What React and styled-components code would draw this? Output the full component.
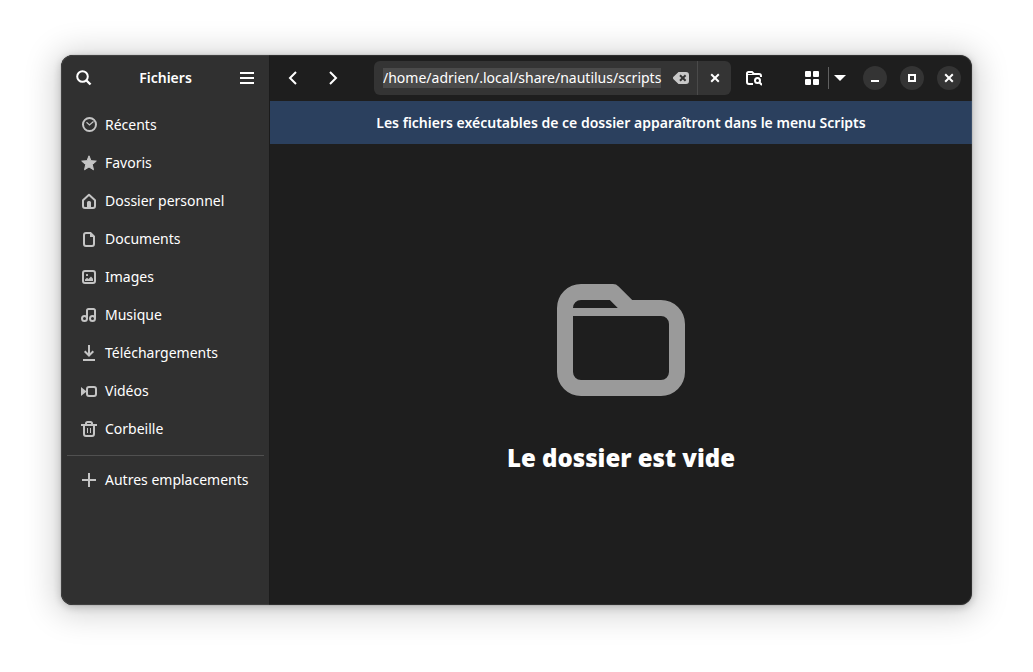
import { useEffect, useRef, useState } from "react";
import styled, { createGlobalStyle } from "styled-components";

const GlobalStyle = createGlobalStyle`
  * {
    box-sizing: border-box;
  }
  body {
    margin: 0;
    background: #ffffff;
    font-family: "Noto Sans", "Open Sans", sans-serif;
    font-size: 14px;
    line-height: 20px;
    color: #ffffff;
  }
  button,
  input {
    font: inherit;
    color: inherit;
  }
`;

const Desktop = styled.div`
  display: flex;
  min-height: 100vh;
  padding: 55px 61px 67px;
`;

const Window = styled.div`
  position: relative;
  flex: 1;
  display: flex;
  min-width: 0;
  border-radius: 12px;
  overflow: hidden;
  background: #1e1e1e;
  box-shadow: 0 0 1px rgba(0, 0, 0, 0.5), 0 2px 8px rgba(0, 0, 0, 0.2),
    0 3px 32px 6px rgba(0, 0, 0, 0.18);

  /* thin highlight over the window edge */
  &::after {
    content: "";
    position: absolute;
    inset: 0;
    border-radius: 12px;
    box-shadow: inset 0 0 0 1px rgba(255, 255, 255, 0.08);
    pointer-events: none;
  }
`;

const Sidebar = styled.aside`
  width: 208px;
  flex-shrink: 0;
  background: #303030;
`;

const SidebarHeader = styled.header`
  display: flex;
  align-items: center;
  justify-content: space-between;
  height: 46px;
  padding: 6px 5px 6px 6px;
`;

const Title = styled.h1`
  margin: 0;
  font-size: 14px;
  font-weight: 600;
`;

const IconButton = styled.button`
  display: flex;
  align-items: center;
  justify-content: center;
  flex-shrink: 0;
  width: ${(props) => props.$width || 34}px;
  height: 34px;
  padding: 0;
  border: 0;
  border-radius: 6px;
  background: transparent;
`;

const PlaceList = styled.ul`
  margin: 0;
  padding: 5px 6px;
  list-style: none;
`;

const Place = styled.a`
  display: flex;
  align-items: center;
  gap: 8px;
  height: 38px;
  padding: 0 14px;
  color: #ffffff;
  text-decoration: none;
  white-space: nowrap;

  svg {
    color: #c4c4c4;
  }
`;

const Separator = styled.hr`
  height: 1px;
  margin: 2px 5px 0 6px;
  border: 0;
  background: #505050;
`;

const Main = styled.main`
  flex: 1;
  display: flex;
  flex-direction: column;
  min-width: 0;
  border-left: 1px solid #1b1b1b;
`;

const HeaderBar = styled.header`
  display: flex;
  align-items: center;
  gap: 6px;
  height: 46px;
  padding: 6px 11px 6px 6px;
`;

const PathEntry = styled.form`
  flex: 1;
  display: flex;
  align-items: center;
  min-width: 0;
  height: 34px;
  margin-left: 18px;
  border-radius: 6px;
  background: #343434;
`;

const PathInput = styled.input`
  flex: 1;
  min-width: 0;
  height: 20px;
  margin-left: 9px;
  padding: 0;
  border: 0;
  outline: 0;
  background: transparent;
  caret-color: transparent;

  &::selection {
    background: #4a4a4a;
    color: #ffffff;
  }
`;

const CancelButton = styled(IconButton)`
  border-left: 1px solid #4a4a4a;
  border-radius: 0 6px 6px 0;
`;

const ViewSwitcher = styled.div`
  display: flex;
  align-items: center;
  margin: 0 6px 0 18px;
`;

const ViewDivider = styled.span`
  width: 1px;
  height: 22px;
  background: #606060;
`;

const WindowControls = styled.div`
  display: flex;
  gap: 13px;
`;

const ControlButton = styled.button`
  display: flex;
  align-items: center;
  justify-content: center;
  width: 24px;
  height: 24px;
  padding: 0;
  border: 0;
  border-radius: 50%;
  background: #343434;
`;

const Banner = styled.div`
  padding: 12px;
  line-height: 19px;
  font-weight: 600;
  text-align: center;
  background: #2b405e;
`;

const EmptyState = styled.section`
  flex: 1;
  display: flex;
  flex-direction: column;
  align-items: center;
  justify-content: center;
  gap: 37px;
  padding-top: 1px;

  svg {
    color: #9a9a9a;
  }
`;

const EmptyTitle = styled.h2`
  margin: 0;
  font-size: 24px;
  line-height: 34px;
  font-weight: 900;
`;

const Icon = ({ size = 16, children }) => (
  <svg width={size} height={size} viewBox="0 0 16 16" fill="currentColor" aria-hidden="true">
    {children}
  </svg>
);

const line = { fill: "none", stroke: "currentColor", strokeWidth: 2 };

const SearchIcon = () => (
  <Icon>
    <circle cx="6.5" cy="6.5" r="5.3" {...line} />
    <path d="M10.5 10.5 14.5 14.5" {...line} strokeWidth="2.4" />
  </Icon>
);

const MenuIcon = () => (
  <Icon>
    <path d="M1 2h14v2H1zM1 7h14v2H1zM1 12h14v2H1z" />
  </Icon>
);

const RecentIcon = () => (
  <Icon>
    <circle cx="8.5" cy="7.5" r="6.5" {...line} />
    <path d="M5.5 5.2 8.5 8l4-3.5" {...line} strokeWidth="1.2" />
  </Icon>
);

const StarIcon = () => (
  <Icon>
    <path
      d="M8 .8 10 5.7 15.3 6.1 11.3 9.6 12.5 14.8 8 12 3.5 14.8 4.7 9.6.7 6.1 6 5.7z"
      stroke="currentColor"
      strokeLinejoin="round"
    />
  </Icon>
);

const HomeIcon = () => (
  <Icon>
    <path d="M2 7.2 8 1.8l6 5.4V13a2 2 0 0 1-2 2H4a2 2 0 0 1-2-2z" {...line} strokeLinejoin="round" />
    <path d="M6 15V9.5A1.5 1.5 0 0 1 7.5 8h1A1.5 1.5 0 0 1 10 9.5V15z" />
  </Icon>
);

const DocumentIcon = () => (
  <Icon>
    <path d="M5 2h4.5L13 5.5V13a2 2 0 0 1-2 2H5a2 2 0 0 1-2-2V4a2 2 0 0 1 2-2z" {...line} />
    <path d="M9 1.5V6h4.5z" />
  </Icon>
);

const ImageIcon = () => (
  <Icon>
    <rect x="2" y="2" width="12" height="12" rx="2" {...line} />
    <rect x="5" y="5" width="2" height="2" rx=".6" />
    <path d="M4 12v-1.5l2-1.7 1.5 1.2L10 7.6l2 2.2V12z" />
  </Icon>
);

const MusicIcon = () => (
  <Icon>
    <circle cx="3.5" cy="11.5" r="2.5" {...line} />
    <circle cx="11.5" cy="11.5" r="2.5" {...line} />
    <path d="M6 11.5v-8A1.5 1.5 0 0 1 7.5 2h5A1.5 1.5 0 0 1 14 3.5v8" {...line} />
  </Icon>
);

const DownloadIcon = () => (
  <Icon>
    <path d="M8 0v10M3.7 6.2 8 10.5l4.3-4.3" {...line} />
    <path d="M2 14h12v2H2z" />
  </Icon>
);

const VideoIcon = () => (
  <Icon>
    <rect x="6" y="4" width="9" height="9" rx="2" {...line} />
    <path d="M0 4v9l5-4V8z" />
  </Icon>
);

const TrashIcon = () => (
  <Icon>
    <path d="M0 3h16v2H0z" />
    <path
      d="M5 4V2.5A1.5 1.5 0 0 1 6.5 1h3A1.5 1.5 0 0 1 11 2.5V4M3 4v9a2 2 0 0 0 2 2h6a2 2 0 0 0 2-2V4"
      {...line}
    />
    <path d="M6 7h1v5H6zM9 7h1v5H9z" />
  </Icon>
);

const PlusIcon = () => (
  <Icon>
    <path d="M7 1h2v6h6v2H9v6H7V9H1V7h6z" />
  </Icon>
);

const BackIcon = () => (
  <Icon>
    <path d="M11 2 5 8l6 6" {...line} />
  </Icon>
);

const ForwardIcon = () => (
  <Icon>
    <path d="M5 2l6 6-6 6" {...line} />
  </Icon>
);

const ClearIcon = () => (
  <Icon>
    <path
      fill="#c8c8c8"
      d="M5.5 2H13a3 3 0 0 1 3 3v6a3 3 0 0 1-3 3H5.5L.5 9.2a1.6 1.6 0 0 1 0-2.4z"
    />
    <path d="M7 5.2 12.6 10.8M12.6 5.2 7 10.8" fill="none" stroke="#343434" strokeWidth="2" />
  </Icon>
);

const CrossIcon = () => (
  <Icon>
    <path d="M4.2 4.2 11.8 11.8M11.8 4.2 4.2 11.8" {...line} />
  </Icon>
);

const FolderSearchIcon = () => (
  <Icon>
    <path
      d="M7 14H3a2 2 0 0 1-2-2V3.5A1.5 1.5 0 0 1 2.5 2H6l2 2h5a2 2 0 0 1 2 2v1"
      {...line}
    />
    <path d="M1 4h7v1H1z" />
    <circle cx="11.5" cy="10.5" r="2.5" {...line} />
    <path d="M13.2 12.2 16 15" {...line} />
  </Icon>
);

const GridIcon = () => (
  <Icon>
    <rect x="1" y="1" width="6" height="6" rx="1" />
    <rect x="9" y="1" width="6" height="6" rx="1" />
    <rect x="1" y="9" width="6" height="6" rx="1" />
    <rect x="9" y="9" width="6" height="6" rx="1" />
  </Icon>
);

const DropDownIcon = () => (
  <Icon>
    <path d="M2 5h12l-6 6z" />
  </Icon>
);

const MinimizeIcon = () => (
  <Icon>
    <path d="M4 10h8v2H4z" />
  </Icon>
);

const MaximizeIcon = () => (
  <Icon>
    <path fillRule="evenodd" d="M4 4h8v8H4zM6 6v4h4V6z" />
  </Icon>
);

const FolderIcon = () => (
  <Icon size={128}>
    <path
      fillRule="evenodd"
      d="M3 1a3 3 0 0 0-3 3v8a3 3 0 0 0 3 3h10a3 3 0 0 0 3-3V6a3 3 0 0 0-3-3H9.4L7.7 1.3A1 1 0 0 0 7 1zM3 3h3.6l1 1H2a1 1 0 0 1 1-1zM2 5h11a1 1 0 0 1 1 1v6a1 1 0 0 1-1 1H3a1 1 0 0 1-1-1z"
    />
  </Icon>
);

const places = [
  { name: "Récents", icon: <RecentIcon /> },
  { name: "Favoris", icon: <StarIcon /> },
  { name: "Dossier personnel", icon: <HomeIcon /> },
  { name: "Documents", icon: <DocumentIcon /> },
  { name: "Images", icon: <ImageIcon /> },
  { name: "Musique", icon: <MusicIcon /> },
  { name: "Téléchargements", icon: <DownloadIcon /> },
  { name: "Vidéos", icon: <VideoIcon /> },
  { name: "Corbeille", icon: <TrashIcon /> },
];

const App = () => {
  const [path, setPath] = useState("/home/adrien/.local/share/nautilus/scripts");
  const pathRef = useRef(null);

  useEffect(() => {
    pathRef.current.focus();
    pathRef.current.select();
  }, []);

  return (
    <>
      <GlobalStyle />
      <Desktop>
        <Window>
          <Sidebar>
            <SidebarHeader>
              <IconButton aria-label="Rechercher">
                <SearchIcon />
              </IconButton>
              <Title>Fichiers</Title>
              <IconButton aria-label="Menu principal">
                <MenuIcon />
              </IconButton>
            </SidebarHeader>
            <nav>
              <PlaceList>
                {places.map((place) => (
                  <li key={place.name}>
                    <Place href="#">
                      {place.icon}
                      {place.name}
                    </Place>
                  </li>
                ))}
              </PlaceList>
              <Separator />
              <PlaceList>
                <li>
                  <Place href="#">
                    <PlusIcon />
                    Autres emplacements
                  </Place>
                </li>
              </PlaceList>
            </nav>
          </Sidebar>
          <Main>
            <HeaderBar>
              <IconButton aria-label="Précédent">
                <BackIcon />
              </IconButton>
              <IconButton aria-label="Suivant">
                <ForwardIcon />
              </IconButton>
              <PathEntry onSubmit={(e) => e.preventDefault()}>
                <PathInput
                  ref={pathRef}
                  type="text"
                  aria-label="Emplacement"
                  spellCheck={false}
                  value={path}
                  onChange={(e) => setPath(e.target.value)}
                />
                <IconButton
                  $width={32}
                  type="button"
                  aria-label="Effacer"
                  onClick={() => setPath("")}
                >
                  <ClearIcon />
                </IconButton>
                <CancelButton type="button" aria-label="Annuler">
                  <CrossIcon />
                </CancelButton>
              </PathEntry>
              <IconButton aria-label="Rechercher dans le dossier">
                <FolderSearchIcon />
              </IconButton>
              <ViewSwitcher>
                <IconButton $width={33} aria-label="Vue en grille">
                  <GridIcon />
                </IconButton>
                <ViewDivider />
                <IconButton $width={22} aria-label="Options de vue">
                  <DropDownIcon />
                </IconButton>
              </ViewSwitcher>
              <WindowControls>
                <ControlButton aria-label="Réduire">
                  <MinimizeIcon />
                </ControlButton>
                <ControlButton aria-label="Agrandir">
                  <MaximizeIcon />
                </ControlButton>
                <ControlButton aria-label="Fermer">
                  <CrossIcon />
                </ControlButton>
              </WindowControls>
            </HeaderBar>
            <Banner>Les fichiers exécutables de ce dossier apparaîtront dans le menu Scripts</Banner>
            <EmptyState>
              <FolderIcon />
              <EmptyTitle>Le dossier est vide</EmptyTitle>
            </EmptyState>
          </Main>
        </Window>
      </Desktop>
    </>
  );
};

export default App;
